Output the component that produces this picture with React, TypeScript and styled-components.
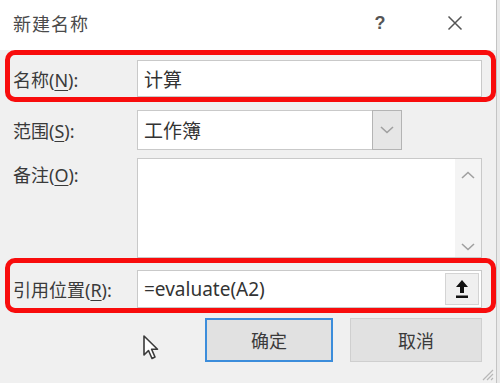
import React from 'react';
import styled, { createGlobalStyle } from 'styled-components';

const GlobalStyle = createGlobalStyle`
    html, body {
        margin: 0;
        padding: 0;
        background: #e9e9e9;
    }
    body {
        font-family: "Noto Sans", "Noto Sans CJK SC", sans-serif;
    }
`;

const Dialog = styled.div`
    position: relative;
    width: 496px;
    height: 383px;
    background: #f0f0f0;
    border-right: 1px solid #c4c4c4;
    overflow: hidden;
    color: #3a3a3a;
    font-family: "Noto Sans", "Noto Sans CJK SC", sans-serif;
`;

const TitleBar = styled.div`
    height: 50px;
    background: #ffffff;
    display: flex;
    align-items: center;
    padding: 0 16px 4px 13px;
    box-sizing: border-box;
`;

const Title = styled.div`
    flex: 1;
    font-size: 18px;
    color: #4a4a4a;
    letter-spacing: 1px;
`;

const TitleButton = styled.div<{ $width: number; $gap?: number }>`
    width: ${p => p.$width}px;
    margin-left: ${p => p.$gap || 0}px;
    display: flex;
    justify-content: center;
    align-items: center;
    color: #555;
`;

const Help = styled.span`
    font-size: 18px;
    font-weight: 700;
    font-family: "Liberation Sans", sans-serif;
`;

const Body = styled.div`
    padding: 0 0 0 5px;
`;

const Row = styled.div<{ $highlight?: boolean; $pad: number; $align?: string }>`
    display: grid;
    grid-template-columns: 127px 1fr;
    align-items: ${p => p.$align || 'center'};
    border-style: solid;
    border-color: ${p => (p.$highlight ? '#f80c0c' : 'transparent')};
    border-width: ${p => (p.$highlight ? '5px' : '0 5px')};
    border-radius: ${p => (p.$highlight ? '10px' : '0')};
    padding: ${p => p.$pad}px 9px 0 0;
`;

const Label = styled.label<{ $top?: number }>`
    padding-left: 3px;
    padding-top: ${p => p.$top || 0}px;
    font-size: 18px;
    color: #3a3a3a;
    font-family: "Noto Sans", "Noto Sans CJK SC", sans-serif;
    white-space: nowrap;

    u {
        text-decoration-thickness: 1px;
        text-underline-offset: 3px;
    }
`;

const Field = styled.div<{ $height: number; $width?: number }>`
    height: ${p => p.$height}px;
    width: ${p => (p.$width ? `${p.$width}px` : 'auto')};
    box-sizing: border-box;
    background: #ffffff;
    border: 1px solid #c9c9c9;
    display: flex;
    align-items: stretch;
`;

const FieldText = styled.div`
    flex: 1;
    display: flex;
    align-items: center;
    padding-left: 6px;
    font-size: 19px;
    color: #333;
`;

const SideButton = styled.div<{ $width: number; $inset?: boolean }>`
    width: ${p => p.$width}px;
    box-sizing: border-box;
    margin: ${p => (p.$inset ? '2px' : '-1px -1px -1px 0')};
    background: ${p => (p.$inset ? '#f0f0f0' : '#e6e6e6')};
    border: 1px solid ${p => (p.$inset ? '#d4d4d4' : '#b4b4b4')};
    display: flex;
    align-items: center;
    justify-content: center;
`;

const Scrollbar = styled.div`
    width: 26px;
    margin-left: auto;
    background: #f4f4f4;
    display: flex;
    flex-direction: column;
    justify-content: space-between;
    align-items: center;
    padding: 12px 0 6px;
`;

const Footer = styled.div`
    display: flex;
    justify-content: flex-end;
    gap: 17px;
    padding: 5px 14px 0 0;
`;

const Button = styled.div<{ $primary?: boolean; $width: number }>`
    width: ${p => p.$width}px;
    height: 44px;
    box-sizing: border-box;
    background: #e1e1e1;
    border: ${p => (p.$primary ? '2px solid #3c8ddb' : '1px solid #cfcfcf')};
    display: flex;
    align-items: center;
    justify-content: center;
    font-size: 18px;
    color: #3a3a3a;
    font-family: "Noto Sans CJK SC", sans-serif;
`;

const Cursor = styled.svg`
    position: absolute;
    left: 142px;
    top: 334px;
`;

const Grip = styled.svg`
    position: absolute;
    right: 2px;
    bottom: 2px;
`;

const Chevron = ({ up }: { up?: boolean }) => (
    <svg width="14" height="8" viewBox="0 0 14 8">
        <path
            d={up ? 'M1 7 L7 1.5 L13 7' : 'M1 1 L7 6.5 L13 1'}
            fill="none"
            stroke="#a0a0a0"
            strokeWidth="1.6"
        />
    </svg>
);

const App: React.FC = () => {
    return (
        <Dialog>
            <GlobalStyle />
            <TitleBar>
                <Title>新建名称</Title>
                <TitleButton $width={30}>
                    <Help>?</Help>
                </TitleButton>
                <TitleButton $width={50} $gap={35}>
                    <svg width="16" height="16" viewBox="0 0 16 16">
                        <path d="M1.5 1.5 L14.5 14.5 M14.5 1.5 L1.5 14.5" stroke="#555" strokeWidth="1.5" />
                    </svg>
                </TitleButton>
            </TitleBar>

            <Body>
                <Row $highlight $pad={5}>
                    <Label>名称(<u>N</u>):</Label>
                    <Field $height={37}>
                        <FieldText>计算</FieldText>
                    </Field>
                </Row>

                <Row $pad={8}>
                    <Label>范围(<u>S</u>):</Label>
                    <Field $height={40} $width={265}>
                        <FieldText>工作簿</FieldText>
                        <SideButton $width={30}>
                            <Chevron />
                        </SideButton>
                    </Field>
                </Row>

                <Row $pad={8} $align="start">
                    <Label $top={3}>备注(<u>O</u>):</Label>
                    <Field $height={100}>
                        <Scrollbar>
                            <Chevron up />
                            <Chevron />
                        </Scrollbar>
                    </Field>
                </Row>

                <Row $highlight $pad={7}>
                    <Label>引用位置(<u>R</u>):</Label>
                    <Field $height={38}>
                        <FieldText>=evaluate(A2)</FieldText>
                        <SideButton $width={34} $inset>
                            <svg width="14" height="20" viewBox="0 0 14 20">
                                <path d="M7 1 L13 8 L9 8 L9 14 L5 14 L5 8 L1 8 Z" fill="#111" />
                                <rect x="1" y="16.5" width="12" height="2.5" fill="#111" />
                            </svg>
                        </SideButton>
                    </Field>
                </Row>

                <Footer>
                    <Button $primary $width={128}>确定</Button>
                    <Button $width={132}>取消</Button>
                </Footer>
            </Body>

            <Cursor width="20" height="28" viewBox="0 0 20 28">
                <path
                    d="M2 2 L2 21 L6.5 16.5 L10 24.5 L13 23 L9.6 15.2 L15.5 15.2 Z"
                    fill="#ffffff"
                    stroke="#3a3a3a"
                    strokeWidth="1.6"
                    strokeLinejoin="round"
                />
            </Cursor>

            <Grip width="14" height="14" viewBox="0 0 14 14">
                <path d="M13 3 L3 13 M13 7 L7 13 M13 11 L11 13" stroke="#b8b8b8" strokeWidth="1.2" />
            </Grip>
        </Dialog>
    );
};

export default App;
